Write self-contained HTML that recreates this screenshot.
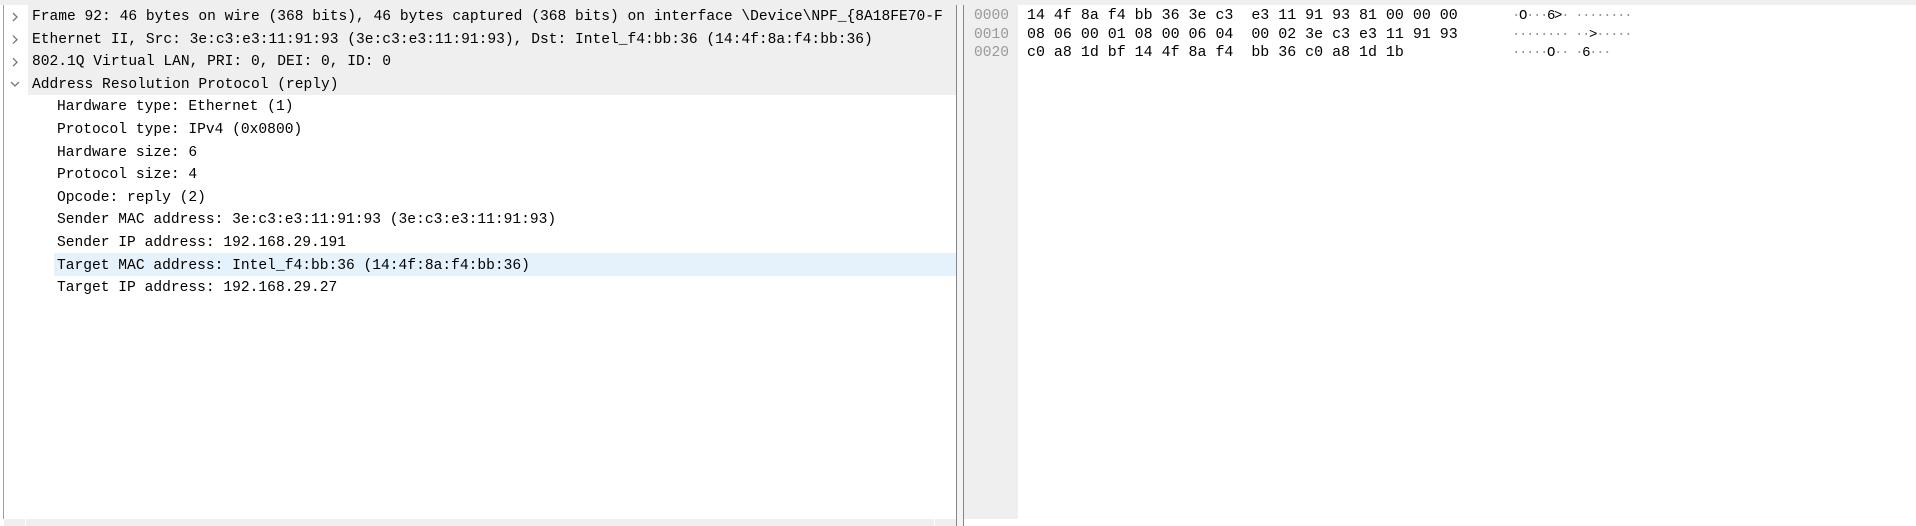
<!DOCTYPE html>
<html><head><meta charset="utf-8"><style>
html,body{margin:0;padding:0;width:1916px;height:526px;overflow:hidden;background:#fff;}
body{position:relative;font-family:"Liberation Mono",monospace;font-size:14.6px;color:#000;}
.abs{position:absolute;white-space:pre;}
.row{position:absolute;left:0;height:22.6px;line-height:22.6px;white-space:pre;}
.dot{color:#999;}
</style></head><body>
<div class="abs" style="left:0;top:0;width:1916px;height:5px;background:#efefef"></div>
<div class="abs" style="left:3px;top:5px;width:1px;height:514px;background:#a0a0a0"></div>
<div class="abs" style="left:28px;top:5px;width:928px;height:90px;background:#efefef"></div>
<div class="abs" style="left:54px;top:253px;width:902px;height:23px;background:#e5f1fb"></div>

<div class="row" style="top:6px;left:32px">Frame 92: 46 bytes on wire (368 bits), 46 bytes captured (368 bits) on interface \Device\NPF_{8A18FE70-F</div>
<div class="row" style="top:28.6px;left:32px">Ethernet II, Src: 3e:c3:e3:11:91:93 (3e:c3:e3:11:91:93), Dst: Intel_f4:bb:36 (14:4f:8a:f4:bb:36)</div>
<div class="row" style="top:51.2px;left:32px">802.1Q Virtual LAN, PRI: 0, DEI: 0, ID: 0</div>
<div class="row" style="top:73.8px;left:32px">Address Resolution Protocol (reply)</div>
<svg class="abs" style="left:9px;top:10px" width="14" height="80" viewBox="0 0 14 80" fill="none" stroke="#777" stroke-width="1.3">
<path d="M4 3 L8 7 L4 11"/><path d="M4 25.6 L8 29.6 L4 33.6"/><path d="M4 48.2 L8 52.2 L4 56.2"/><path d="M2 72 L6 76 L10 72"/></svg>

<div class="row" style="top:96.4px;left:57px">Hardware type: Ethernet (1)</div>
<div class="row" style="top:119px;left:57px">Protocol type: IPv4 (0x0800)</div>
<div class="row" style="top:141.6px;left:57px">Hardware size: 6</div>
<div class="row" style="top:164.2px;left:57px">Protocol size: 4</div>
<div class="row" style="top:186.8px;left:57px">Opcode: reply (2)</div>
<div class="row" style="top:209.4px;left:57px">Sender MAC address: 3e:c3:e3:11:91:93 (3e:c3:e3:11:91:93)</div>
<div class="row" style="top:232px;left:57px">Sender IP address: 192.168.29.191</div>
<div class="row" style="top:254.6px;left:57px">Target MAC address: Intel_f4:bb:36 (14:4f:8a:f4:bb:36)</div>
<div class="row" style="top:277.2px;left:57px">Target IP address: 192.168.29.27</div>

<div class="abs" style="left:4px;top:519px;width:952px;height:7px;background:#efefef"></div>
<div class="abs" style="left:25px;top:519px;width:1px;height:7px;background:#fff"></div>
<div class="abs" style="left:934px;top:519px;width:1px;height:7px;background:#fff"></div>

<div class="abs" style="left:956px;top:5px;width:7px;height:521px;background:#f4f4f4"></div>
<div class="abs" style="left:956px;top:5px;width:1px;height:521px;background:#85858c"></div>
<div class="abs" style="left:963px;top:5px;width:1px;height:521px;background:#85858c"></div>
<div class="abs" style="left:964px;top:5px;width:54px;height:514px;background:#efefef"></div>

<div class="abs" style="left:974px;top:7px;line-height:18.5px;color:#999">0000
0010
0020</div>
<div class="abs" style="left:1027px;top:7px;line-height:18.5px;font-size:14.96px">14 4f 8a f4 bb 36 3e c3  e3 11 91 93 81 00 00 00
08 06 00 01 08 00 06 04  00 02 3e c3 e3 11 91 93
c0 a8 1d bf 14 4f 8a f4  bb 36 c0 a8 1d 1b</div>
<div class="abs" style="left:1512px;top:7px;line-height:18.5px;font-size:14px;letter-spacing:-1.4px"><span class="dot">·</span>O<span class="dot">···</span>6&gt;<span class="dot">·</span> <span class="dot">········</span>
<span class="dot">········</span> <span class="dot">··</span>&gt;<span class="dot">·····</span>
<span class="dot">·····</span>O<span class="dot">··</span> <span class="dot">·</span>6<span class="dot">···</span></div>
</body></html>
